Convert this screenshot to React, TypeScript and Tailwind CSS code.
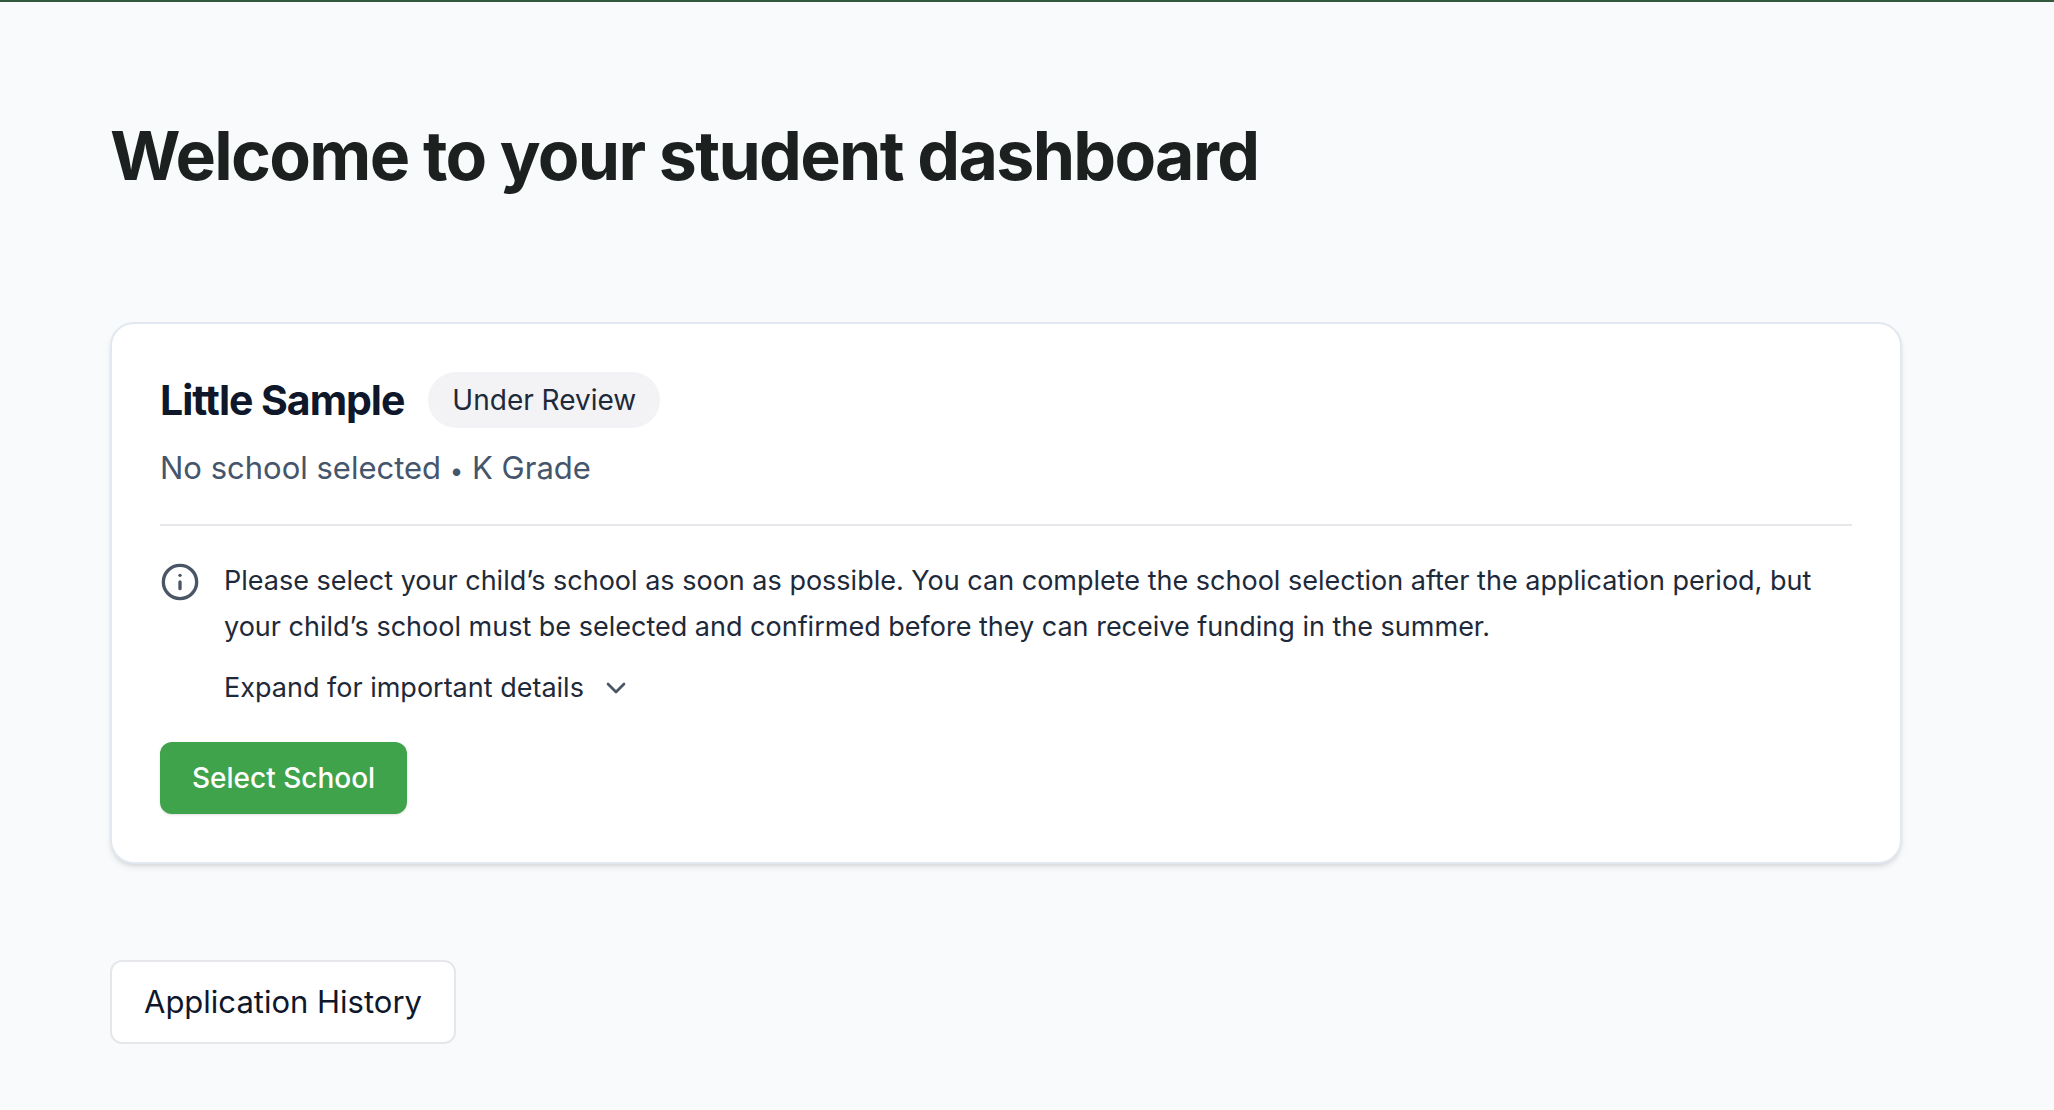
import { ChevronDown, Info } from 'lucide-react'

function StatusBadge({ label }: { label: string }) {
  return (
    <span className="rounded-full bg-[#f3f3f5] px-6 py-3 text-[28px] leading-8 text-gray-800">{label}</span>
  )
}

function StudentCard() {
  return (
    <section className="rounded-3xl border-2 border-slate-200 bg-white p-12 shadow-md">
      <div className="flex items-center gap-6">
        <h2 className="text-[41px] leading-14 font-bold tracking-tight text-slate-900">Little Sample</h2>
        <StatusBadge label="Under Review" />
      </div>
      <p className="mt-4 text-[31px] leading-12 text-slate-600">
        No school selected <span className="text-2xl">•</span> K Grade
      </p>

      <div className="mt-8 flex gap-6 border-t-2 border-gray-200 pt-8">
        <Info className="mt-1 size-10 shrink-0 text-gray-600" />
        <div className="text-[27px] text-gray-800">
          <p className="leading-[46px]">
            Please select your child’s school as soon as possible. You can complete the school selection after the
            application period, but your child’s school must be selected and confirmed before they can receive funding
            in the summer.
          </p>
          <button type="button" aria-expanded={false} className="mt-4 flex items-center gap-4 leading-11">
            Expand for important details
            <ChevronDown className="size-8 text-gray-600" />
          </button>
        </div>
      </div>

      <button
        type="button"
        className="mt-8 rounded-xl bg-[#3fa34b] px-8 py-4 text-[28px] leading-10 font-medium text-white shadow-sm"
      >
        Select School
      </button>
    </section>
  )
}

export default function App() {
  return (
    <div className="min-h-screen border-t-2 border-[#35593d] bg-[#f9fafc] font-['Inter',sans-serif]">
      <main className="pt-28 pr-[152px] pb-16 pl-[110px]">
        <h1 className="text-[68px] leading-[82px] font-bold tracking-tight text-[#1c211f]">
          Welcome to your student dashboard
        </h1>
        <div className="mt-[126px]">
          <StudentCard />
        </div>
        <button
          type="button"
          className="mt-24 rounded-xl border-2 border-gray-200 bg-white px-8 py-4 text-[31px] leading-12 text-slate-900"
        >
          Application History
        </button>
      </main>
    </div>
  )
}
